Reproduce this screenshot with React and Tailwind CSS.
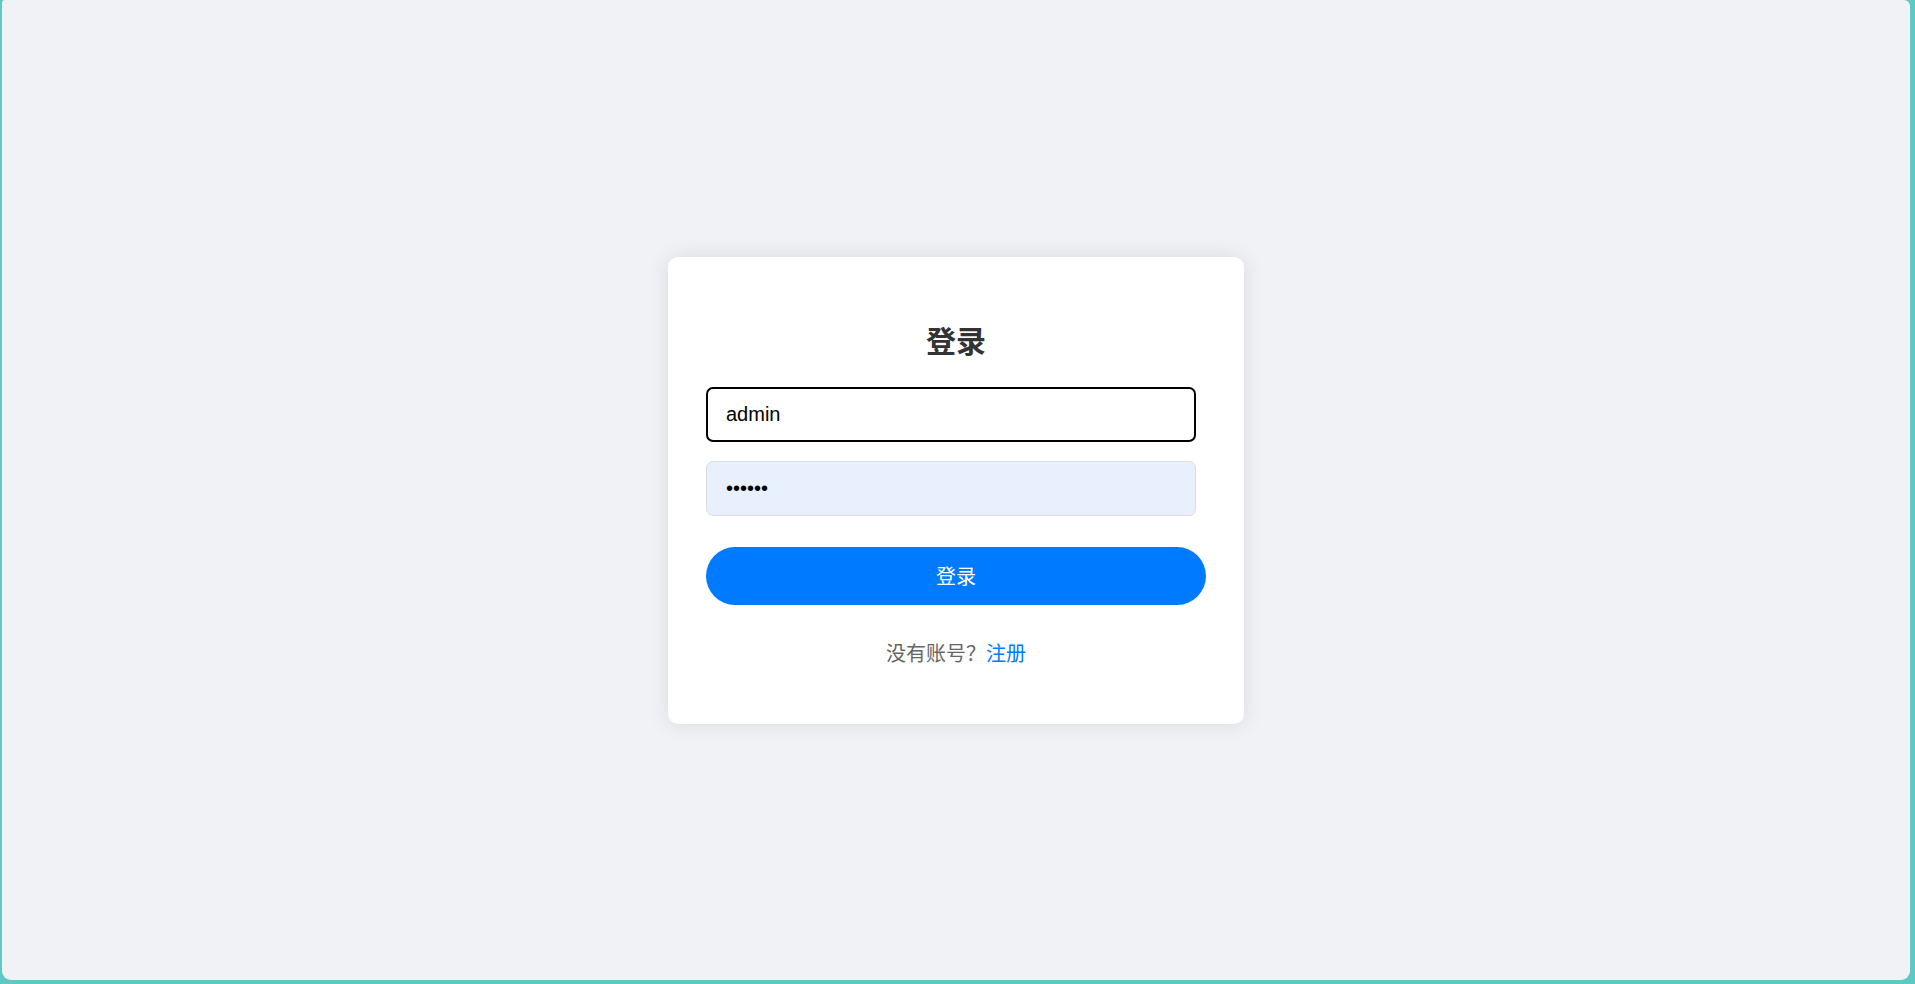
import { useState } from 'react';

const App = () => {
  const [form, setForm] = useState({ username: 'admin', password: '123456' });

  const handleChange = (e) => {
    const { name, value } = e.target;
    setForm({ ...form, [name]: value });
  };

  const handleSubmit = (e) => {
    e.preventDefault();
  };

  return (
    // teal desktop frame around the window
    <div className="h-screen w-full bg-[#5ec8c5] pl-[2px] pr-[5px] pb-[4px] font-['Liberation_Sans','Noto_Sans_CJK_SC',sans-serif]">
      <div className="h-full w-full bg-[#f0f2f5] rounded-tl-[3px] rounded-tr-[6px] rounded-b-[9px] flex items-center justify-center">
        <div className="w-[576px] bg-white rounded-[10px] shadow-[0_0_22px_rgba(0,0,0,0.1)] px-[38px] pt-[64px] pb-[57px]">
          <h2 className="text-[30px] leading-[36px] font-bold text-[#333] text-center font-['Noto_Sans_CJK_SC',sans-serif]">
            登录
          </h2>
          <form onSubmit={handleSubmit} className="mt-[30px] flex flex-col">
            {/* Username */}
            <input
              type="text"
              name="username"
              value={form.username}
              onChange={handleChange}
              className="w-[490px] h-[55px] px-[18px] border-2 border-black rounded-[7px] text-[20px] text-black outline-none bg-white"
            />

            {/* Password (autofilled) */}
            <input
              type="password"
              name="password"
              value={form.password}
              onChange={handleChange}
              className="mt-[19px] w-[490px] h-[55px] px-[19px] border border-[#d9dde3] rounded-[7px] text-[20px] text-black outline-none bg-[#e8f0fe]"
            />

            <button
              type="submit"
              className="mt-[31px] w-[500px] h-[58px] rounded-full bg-[#007bff] text-white text-[20px] font-['Noto_Sans_CJK_SC',sans-serif]"
            >
              登录
            </button>
          </form>

          <p className="mt-[34px] text-center text-[20px] leading-[28px] text-[#666] font-['Noto_Sans_CJK_SC',sans-serif]">
            没有账号？<a href="#" className="text-[#007bff]">注册</a>
          </p>
        </div>
      </div>
    </div>
  );
};

export default App;
